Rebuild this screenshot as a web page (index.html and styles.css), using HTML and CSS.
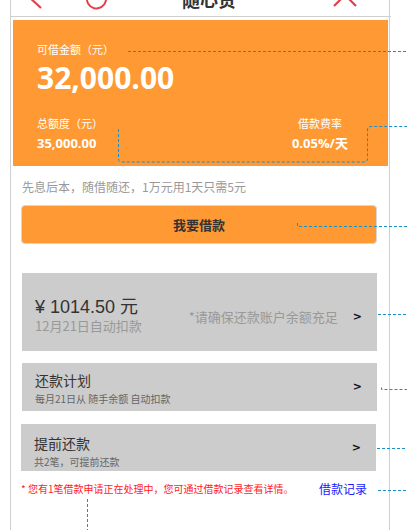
FILE: index.html
```html
<!DOCTYPE html>
<html lang="zh-CN">
<head>
<meta charset="utf-8">
<title>随心贷</title>
<link rel="stylesheet" href="styles.css">
</head>
<body>
<div class="page">
  <header class="topbar">
    <svg class="ic-back" width="20" height="34" viewBox="0 0 20 34"><polyline points="18,2 5,14 18,26" fill="none" stroke="#e5404a" stroke-width="2.2"/></svg>
    <svg class="ic-refresh" width="24" height="34" viewBox="0 0 24 34"><path d="M20.7 12.25 A9.5 9.5 0 1 1 7.75 8.77" fill="none" stroke="#e5404a" stroke-width="2"/><polyline points="16.5,12.5 20.9,12.4 21.5,7.8" fill="none" stroke="#e5404a" stroke-width="2"/></svg>
    <span class="title">随心贷</span>
    <svg class="ic-close" width="26" height="34" viewBox="0 0 26 34"><path d="M2 2 L24 24 M24 2 L2 24" fill="none" stroke="#e5404a" stroke-width="2.2"/></svg>
  </header>

  <section class="quota">
    <div class="q-label">可借金额（元）</div>
    <div class="q-amount">32,000.00</div>
    <div class="q-row">
      <div class="q-col">
        <div class="q-label">总额度（元）</div>
        <div class="q-val">35,000.00</div>
      </div>
      <div class="q-col q-right">
        <div class="q-label">借款费率</div>
        <div class="q-val">0.05%/天</div>
      </div>
    </div>
  </section>

  <p class="tip">先息后本，随借随还，1万元用1天只需5元</p>

  <button class="borrow">我要借款</button>

  <div class="card card-bill">
    <div class="bill-left">
      <div class="bill-amount">¥ 1014.50 元</div>
      <div class="bill-date">12月21日自动扣款</div>
    </div>
    <div class="bill-right">
      <span class="bill-note">*请确保还款账户余额充足</span>
      <span class="arrow">&gt;</span>
    </div>
  </div>

  <div class="card card-row card-plan">
    <div class="row-text">
      <div class="row-title">还款计划</div>
      <div class="row-sub">每月21日从 随手余额 自动扣款</div>
    </div>
    <span class="arrow">&gt;</span>
  </div>

  <div class="card card-row card-early">
    <div class="row-text">
      <div class="row-title">提前还款</div>
      <div class="row-sub">共2笔，可提前还款</div>
    </div>
    <span class="arrow">&gt;</span>
  </div>

  <div class="footer">
    <span class="notice">* 您有1笔借款申请正在处理中，您可通过借款记录查看详情。</span>
    <a class="record" href="#">借款记录</a>
  </div>
</div>

<svg class="annot" width="407" height="530" viewBox="0 0 407 530">
  <g fill="none" stroke="#1b8fc8" stroke-width="1" stroke-dasharray="3 2">
    <path d="M128 51.5 H407"/>
    <path d="M118.5 129 V159 Q118.5 162 121.5 162 H364 Q367.5 162 367.5 158.5 V130 Q367.5 126.5 371 126.5 H407"/>
    <path d="M297.5 223 V226.5 H407"/>
    <path d="M378 314.5 H407"/>
    <path d="M381.5 387.5 V389.5 H407"/>
    <path d="M377 448.5 H407"/>
    <path d="M378 490.5 H407"/>
    <path d="M87.5 499 V530"/>
  </g>
</svg>
</body>
</html>
```

FILE: styles.css
```css
* { box-sizing: border-box; }

html, body {
  margin: 0;
  padding: 0;
  background: #fff;
  overflow: hidden;
}

body {
  position: relative;
  width: 407px;
  height: 530px;
  font-family: "Noto Sans CJK SC", "Noto Sans", sans-serif;
  color: #333;
}

.page {
  margin: -18px 0 0 10px;
  width: 380px;
  min-height: 600px;
  border-left: 1px solid #cfcfcf;
  border-right: 1px solid #cfcfcf;
}

.topbar {
  display: flex;
  align-items: center;
  height: 35px;
  border-bottom: 1px solid #cfcfcf;
  margin-right: -2px;
}

.topbar svg { display: block; overflow: visible; flex: none; }
.ic-back { margin-left: 12px; }
.ic-refresh { margin-left: 41px; }
.title {
  margin-left: 73px;
  width: 56px;
  text-align: center;
  font-size: 18px;
  font-weight: 700;
  color: #333;
  line-height: 34px;
  white-space: nowrap;
}
.ic-close { margin-left: 95px; }

.quota {
  margin: 3px 1px 0 2px;
  background: #ff9933;
  color: #fff;
  padding: 21px 0 15px 24px;
}

.q-label {
  font-size: 11px;
  line-height: 16px;
}

.q-amount {
  margin-top: 4px;
  font-family: "Open Sans", "Noto Sans", sans-serif;
  font-weight: 700;
  font-size: 30px;
  line-height: 34px;
}

.q-row {
  margin-top: 20px;
  display: flex;
  justify-content: space-between;
  padding-right: 40px;
}

.q-right { text-align: center; }

.q-val {
  margin-top: 4px;
  font-family: "Open Sans", "Noto Sans CJK SC", sans-serif;
  font-weight: 700;
  font-size: 13px;
  line-height: 16px;
}

.tip {
  margin: 13px 0 0 11px;
  font-size: 12px;
  line-height: 16px;
  color: #999;
}

.borrow {
  display: block;
  margin: 10px 12px 0 10px;
  width: 356px;
  height: 39px;
  padding: 0;
  border: 1px solid #d6d6d6;
  border-radius: 4px;
  background: #ff9933;
  font-family: "Noto Sans CJK SC", sans-serif;
  font-size: 13px;
  font-weight: 700;
  color: #333;
  line-height: 37px;
}

.card {
  background: #cccccc;
  margin-left: 11px;
  margin-right: 12px;
}

.arrow {
  font-family: "DejaVu Sans", sans-serif;
  font-weight: 700;
  font-size: 11px;
  color: #111;
  line-height: 16px;
}

.card-bill {
  margin-top: 29px;
  height: 78px;
  display: flex;
  align-items: flex-start;
  padding: 23px 15px 0 13px;
}

.bill-amount {
  font-family: "Liberation Sans", "Noto Sans CJK SC", sans-serif;
  font-size: 18px;
  line-height: 22px;
  color: #333;
}

.bill-date {
  font-size: 13px;
  line-height: 16px;
  color: #999;
}

.bill-right {
  margin-left: auto;
  margin-top: 13px;
  display: flex;
  align-items: center;
  gap: 15px;
}

.bill-note {
  font-size: 13px;
  line-height: 16px;
  color: #999;
}

.card-row {
  display: flex;
  align-items: center;
  justify-content: space-between;
  padding: 0 15px 0 13px;
}

.row-text { align-self: flex-start; }

.card-plan {
  margin-top: 12px;
  height: 48px;
  padding-top: 8px;
}

.card-plan .arrow { margin-top: -8px; }

.card-early {
  margin-top: 13px;
  height: 47px;
  margin-left: 10px;
  margin-right: 13px;
  padding-top: 10px;
}

.card-early .arrow { margin-top: -10px; }

.row-title {
  font-size: 14px;
  line-height: 18px;
  color: #333;
}

.row-sub {
  margin-top: 3px;
  font-size: 10px;
  line-height: 14px;
  color: #666;
}

.footer {
  margin-top: 10px;
  display: flex;
  align-items: center;
  padding-left: 10px;
  padding-right: 22px;
}

.notice {
  font-size: 10px;
  line-height: 16px;
  color: #ff1a1a;
  white-space: nowrap;
}

.record {
  margin-left: auto;
  font-size: 12px;
  line-height: 16px;
  color: #1a1aff;
  text-decoration: none;
}

.annot {
  position: absolute;
  top: 0;
  left: 0;
  pointer-events: none;
}
```
